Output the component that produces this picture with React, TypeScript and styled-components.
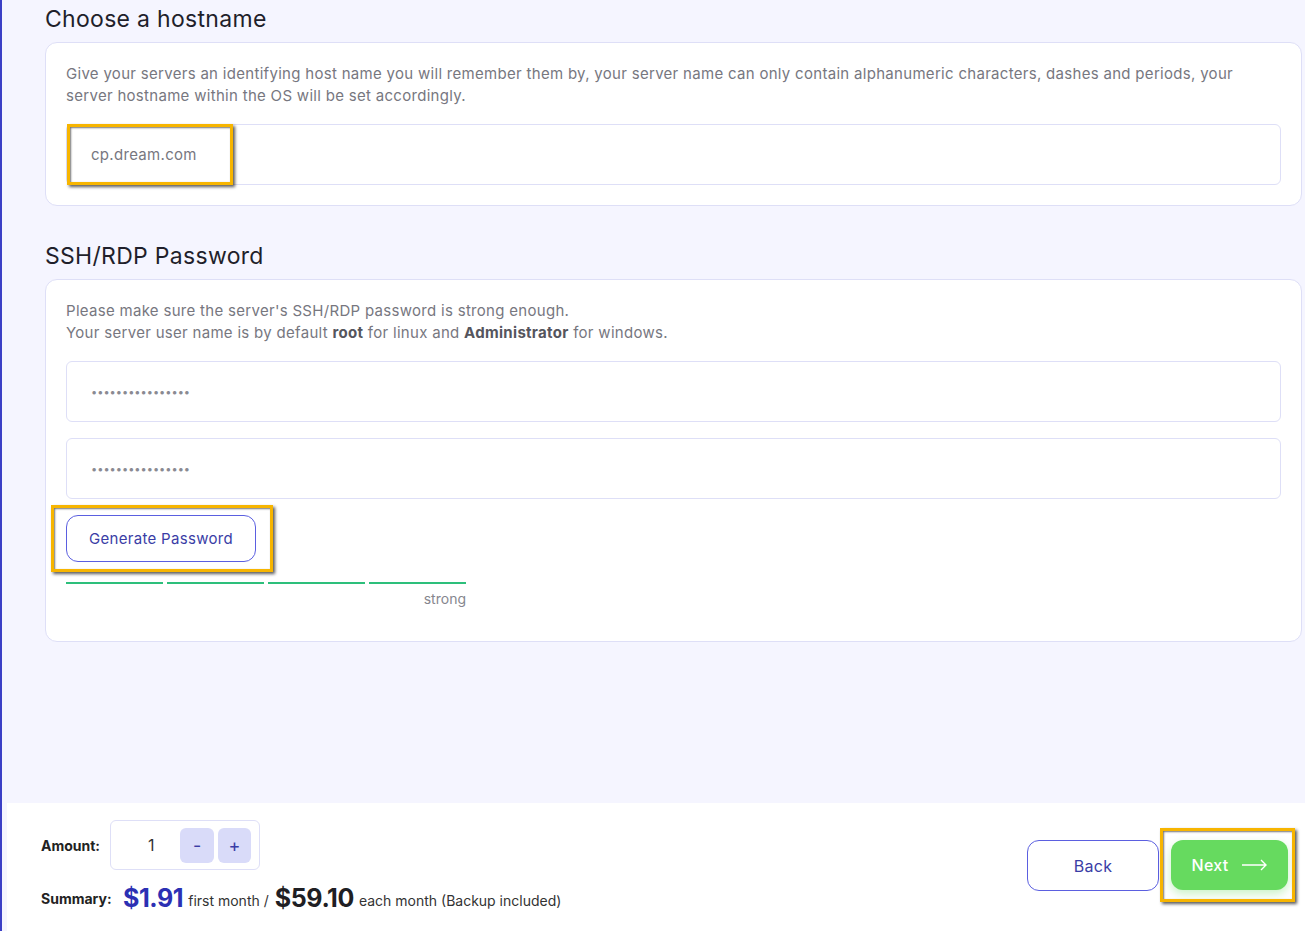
import styled, { createGlobalStyle } from 'styled-components';

const GlobalStyle = createGlobalStyle`
  html, body {
    margin: 0;
    padding: 0;
    background: #f5f5ff;
    font-family: Inter, "Noto Sans", sans-serif;
  }
  * { box-sizing: border-box; }
`;

const Page = styled.div`
  height: 931px;
  border-left: 2px solid #3b3fc6;
  display: flex;
  flex-direction: column;
  overflow: hidden;
`;

const Main = styled.div`
  flex: 1;
  padding: 5px 3px 0 43px;
`;

const Title = styled.h2`
  margin: 0 0 9px;
  font-size: 23px;
  font-weight: 400;
  letter-spacing: 0.3px;
  color: #1f1f2b;
  line-height: 28px;
`;

const Card = styled.div<{ $pad?: string }>`
  background: #fff;
  border: 1px solid #dedff7;
  border-radius: 12px;
  padding: ${(p) => p.$pad || '20px 20px 20px 20px'};
  margin-bottom: 36px;
`;

const Help = styled.p`
  margin: 0 0 17px;
  font-size: 15px;
  line-height: 22px;
  letter-spacing: 0.3px;
  color: #77777f;
  b { color: #55555d; font-weight: 700; }
`;

const FieldWrap = styled.div`
  position: relative;
`;

const Input = styled.input`
  display: block;
  width: 100%;
  height: 61px;
  border: 1px solid #dedff7;
  border-radius: 6px;
  padding: 0 24px;
  font-family: inherit;
  font-size: 15px;
  letter-spacing: 0.3px;
  color: #77777f;
  outline: none;
  background: #fff;
  &[type='password'] {
    font-size: 11px;
    letter-spacing: 0;
    color: #8a8a92;
  }
`;

const Highlight = styled.div<{ $l: number; $t: number; $w: number; $h: number }>`
  position: absolute;
  left: ${(p) => p.$l}px;
  top: ${(p) => p.$t}px;
  width: ${(p) => p.$w}px;
  height: ${(p) => p.$h}px;
  border: 3px solid #f7b500;
  box-shadow: 2px 2px 3px rgba(0, 0, 0, 0.65), inset 1px 1px 2px rgba(0, 0, 0, 0.55);
  pointer-events: none;
`;

const Passwords = styled.div`
  display: flex;
  flex-direction: column;
  gap: 16px;
`;

const GenRow = styled.div`
  position: relative;
  margin-top: 16px;
`;

const OutlineButton = styled.button<{ $w: number; $h: number; $size?: number }>`
  width: ${(p) => p.$w}px;
  height: ${(p) => p.$h}px;
  border: 1px solid #5b5fe0;
  border-radius: 12px;
  background: #fff;
  color: #3a3da6;
  font-family: inherit;
  font-size: ${(p) => p.$size || 15}px;
  letter-spacing: 0.3px;
  cursor: pointer;
`;

const Meter = styled.div`
  width: 400px;
  margin-top: 20px;
`;

const Bars = styled.div`
  display: flex;
  gap: 4px;
`;

const Bar = styled.div`
  flex: 1;
  height: 2px;
  background: #2dbf7b;
`;

const MeterLabel = styled.div`
  text-align: right;
  font-size: 14px;
  color: #86868e;
  margin-top: 6px;
  line-height: 18px;
`;

const Footer = styled.div`
  margin-left: 5px;
  height: 128px;
  background: #fff;
  display: flex;
  justify-content: space-between;
  align-items: flex-start;
  padding: 17px 17px 0 34px;
`;

const Left = styled.div`
  display: flex;
  flex-direction: column;
  gap: 13px;
`;

const Row = styled.div`
  display: flex;
  align-items: center;
`;

const Label = styled.span<{ $w: number }>`
  width: ${(p) => p.$w}px;
  font-size: 14px;
  font-weight: 700;
  color: #222;
`;

const Stepper = styled.div`
  width: 150px;
  height: 50px;
  border: 1px solid #dedff7;
  border-radius: 6px;
  display: flex;
  align-items: center;
  padding: 0 8px 0 0;
  gap: 4px;
`;

const Qty = styled.span`
  width: 66px;
  padding-left: 37px;
  font-size: 16px;
  color: #333;
`;

const StepBtn = styled.button`
  width: 34px;
  height: 35px;
  border: none;
  border-radius: 6px;
  background: #d9dbf9;
  color: #3a3da6;
  font-family: inherit;
  font-size: 18px;
  padding: 0;
`;

const Price = styled.span<{ $blue?: boolean }>`
  font-size: 25px;
  font-weight: 700;
  color: ${(p) => (p.$blue ? '#2c30b3' : '#1f1f24')};
  letter-spacing: -0.4px;
`;

const Small = styled.span`
  font-size: 14px;
  color: #333;
  margin: 4px 6px 0 5px;
`;

const Right = styled.div`
  display: flex;
  gap: 12px;
  margin-top: 20px;
  position: relative;
`;

const NextButton = styled.button`
  width: 117px;
  height: 50px;
  border: none;
  border-radius: 12px;
  background: #66da5f;
  color: #fff;
  font-family: inherit;
  font-size: 16px;
  font-weight: 500;
  letter-spacing: 0.3px;
  display: flex;
  align-items: center;
  justify-content: center;
  gap: 13px;
  box-shadow: 0 4px 10px rgba(102, 218, 95, 0.35);
`;

export default function App() {
  return (
    <>
      <GlobalStyle />
      <Page>
        <Main>
          <Title>Choose a hostname</Title>
          <Card>
            <Help>
              Give your servers an identifying host name you will remember them by, your server name can only contain
              alphanumeric characters, dashes and periods, your server hostname within the OS will be set accordingly.
            </Help>
            <FieldWrap>
              <Input defaultValue="cp.dream.com" />
              <Highlight $l={1} $t={0} $w={166} $h={61} />
            </FieldWrap>
          </Card>

          <Title>SSH/RDP Password</Title>
          <Card $pad="20px 20px 33px 20px">
            <Help>
              Please make sure the server's SSH/RDP password is strong enough.
              <br />
              Your server user name is by default <b>root</b> for linux and <b>Administrator</b> for windows.
            </Help>
            <Passwords>
              <Input type="password" defaultValue="abcdefghijklmnop" />
              <Input type="password" defaultValue="abcdefghijklmnop" />
            </Passwords>
            <GenRow>
              <OutlineButton $w={190} $h={47}>Generate Password</OutlineButton>
              <Highlight $l={-15} $t={-10} $w={222} $h={67} />
            </GenRow>
            <Meter>
              <Bars>
                <Bar />
                <Bar />
                <Bar />
                <Bar />
              </Bars>
              <MeterLabel>strong</MeterLabel>
            </Meter>
          </Card>
        </Main>

        <Footer>
          <Left>
            <Row>
              <Label $w={69}>Amount:</Label>
              <Stepper>
                <Qty>1</Qty>
                <StepBtn>-</StepBtn>
                <StepBtn>+</StepBtn>
              </Stepper>
            </Row>
            <Row>
              <Label $w={82}>Summary:</Label>
              <Price $blue>$1.91</Price>
              <Small>first month /</Small>
              <Price>$59.10</Price>
              <Small>each month (Backup included)</Small>
            </Row>
          </Left>
          <Right>
            <OutlineButton $w={132} $h={51} $size={16}>Back</OutlineButton>
            <NextButton>
              Next
              <svg width="26" height="12" viewBox="0 0 26 12" fill="none" stroke="#fff" strokeWidth="1.4">
                <path d="M0 6h24M19 1l5 5-5 5" />
              </svg>
            </NextButton>
            <Highlight $l={133} $t={-12} $w={135} $h={74} />
          </Right>
        </Footer>
      </Page>
    </>
  );
}
